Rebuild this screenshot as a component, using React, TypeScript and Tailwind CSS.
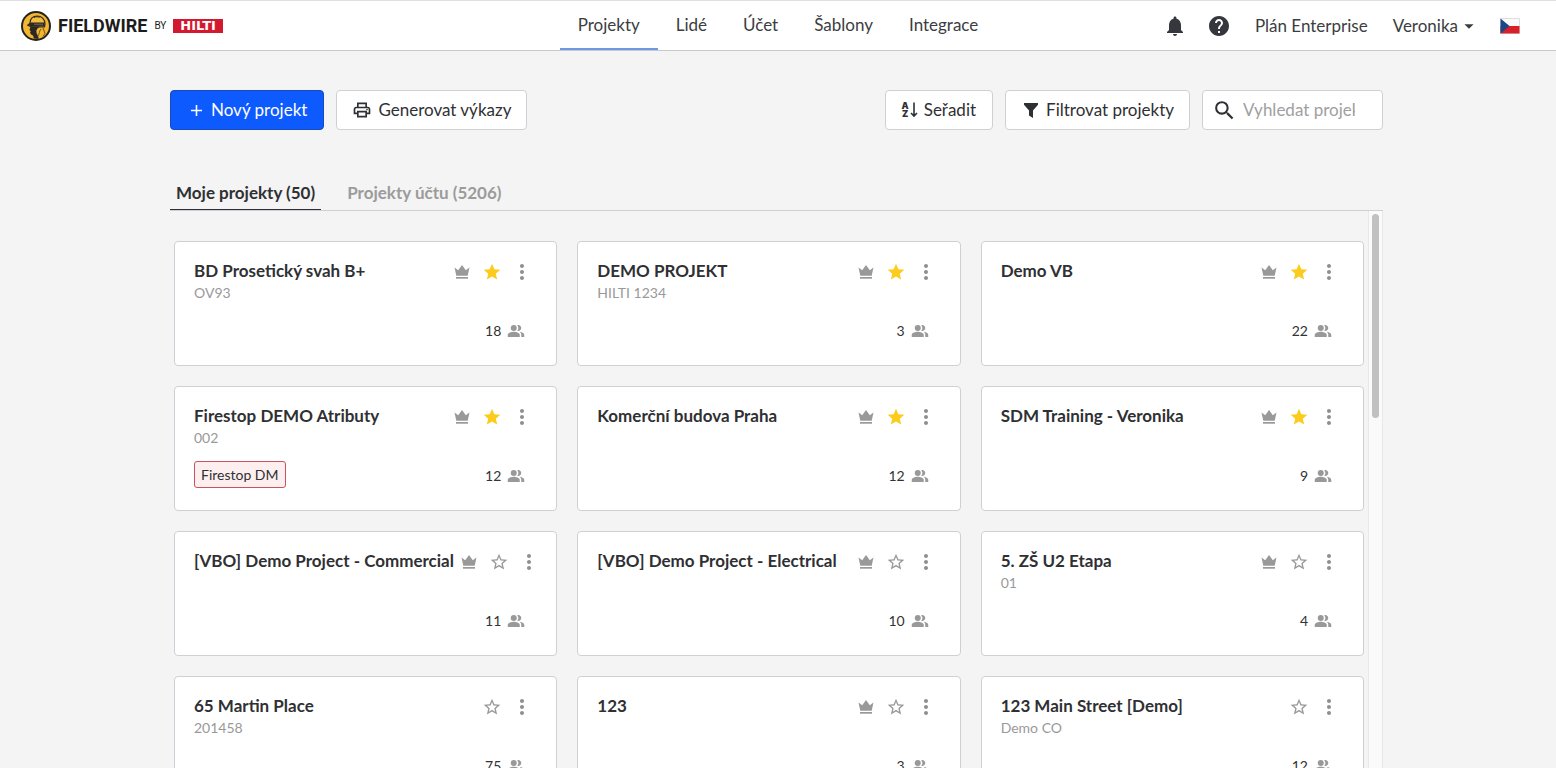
import React, { useState } from 'react';
import {
  MdAdd,
  MdArrowDropDown,
  MdHelp,
  MdMoreVert,
  MdNotifications,
  MdOutlinePrint,
  MdPeopleAlt,
  MdSearch,
  MdStar,
  MdStarBorder,
} from 'react-icons/md';

interface Project {
  name: string;
  code?: string;
  tag?: string;
  members: number;
  crown: boolean;
  starred: boolean;
}

const PROJECTS: Project[] = [
  { name: 'BD Prosetický svah B+', code: 'OV93', members: 18, crown: true, starred: true },
  { name: 'DEMO PROJEKT', code: 'HILTI 1234', members: 3, crown: true, starred: true },
  { name: 'Demo VB', members: 22, crown: true, starred: true },
  { name: 'Firestop DEMO Atributy', code: '002', tag: 'Firestop DM', members: 12, crown: true, starred: true },
  { name: 'Komerční budova Praha', members: 12, crown: true, starred: true },
  { name: 'SDM Training - Veronika', members: 9, crown: true, starred: true },
  { name: '[VBO] Demo Project - Commercial', members: 11, crown: true, starred: false },
  { name: '[VBO] Demo Project - Electrical', members: 10, crown: true, starred: false },
  { name: '5. ZŠ U2 Etapa', code: '01', members: 4, crown: true, starred: false },
  { name: '65 Martin Place', code: '201458', members: 75, crown: false, starred: false },
  { name: '123', members: 3, crown: true, starred: false },
  { name: '123 Main Street [Demo]', code: 'Demo CO', members: 12, crown: false, starred: false },
];

const NAV = ['Projekty', 'Lidé', 'Účet', 'Šablony', 'Integrace'];

const LogoMark = () => (
  <svg className="w-[30px] h-[30px]" viewBox="0 0 30 30" aria-hidden="true">
    <circle cx="15" cy="15" r="14" fill="#f2b632" stroke="#26231f" strokeWidth="2" />
    {/* helmet */}
    <path d="M9 12C9 7.500 12 5 16 5c5 0 8 3.500 8 8l-.5 3H11l-4-1.500Z" fill="#f5bd3d" stroke="#2b2721" strokeWidth="1.200" />
    <path d="M13 6.500c2-1 4-1 5.500 0" stroke="#2b2721" strokeWidth="1" fill="none" />
    <path d="M6 14l4-2.500h13.500v4L11 15.500Z" fill="#2b2721" />
    <path d="M13 12.500h9v2l-9-.5Z" fill="#5d564d" />
    {/* shaded face */}
    <path d="M9.500 15.500h9.500c-3 2-4 3.500-3.500 6 .3 2 2.500 3.500 2 6.500l-5-.5c.5-2-.5-3.500-2.500-4l-1-2 .8-1-1.300-1.500Z" fill="#2b2721" />
    <path d="M20 18c-2.500 3-1 4.500-3 7M22 17l2 5.500-2 3" stroke="#6b5526" strokeWidth="1" fill="none" />
  </svg>
);

const Crown = () => (
  <svg className="w-4 h-4" viewBox="0 0 16 16" fill="#999" role="img" aria-label="Správce">
    <path d="M0.500 3.500l3.700 2.700L8 1l3.800 5.200 3.700-2.700-1.800 8.300H2.300Z" />
    <path d="M2 13h12v1.700H2Z" />
  </svg>
);

const SortIcon = () => (
  <span className="flex items-center gap-px" aria-hidden="true">
    <span className="flex flex-col font-['Inter',sans-serif] text-[9px] leading-[8px] font-black text-center">
      <span>A</span>
      <span>Z</span>
    </span>
    <svg className="w-2 h-4" viewBox="0 0 8 16" fill="none" stroke="#2f3033" strokeWidth="1.600">
      <path d="M4 .5v13M1 11l3 3 3-3" />
    </svg>
  </span>
);

const FilterIcon = () => (
  <svg className="w-[14px] h-[15px]" viewBox="0 0 14 15" fill="#2f3033" aria-hidden="true">
    <path d="M0 0h14v1.800L9 7.500V15L5 12.500v-5L0 1.800Z" />
  </svg>
);

const CzechFlag = () => (
  <svg className="w-5 h-4" viewBox="0 0 20 16" role="img" aria-label="Čeština">
    <path d="M.5 .5h19v15H.5Z" fill="#fafafa" stroke="#dedede" />
    <path d="M.5 8h19v7.500H.5Z" fill="#d7202a" />
    <path d="M.5 .5L9.500 8l-9 7.500Z" fill="#1d4686" />
  </svg>
);

const Header = () => (
  <header className="grid grid-cols-[1fr_auto_1fr] h-[51px] shrink-0 bg-white border-t border-t-[#dfdfdf] border-b border-b-[#c9c9cb] text-[#3c3d41]">
    <a href="#" className="flex items-center pl-[21px] text-[#1c1c1c]">
      <LogoMark />
      <span className="ml-[7px] font-['Roboto',sans-serif] text-lg font-bold">FIELDWIRE</span>
      <span className="ml-[7px] font-['Roboto',sans-serif] text-[10px]">BY</span>
      <span className="ml-[7px] h-[14px] px-[7px] bg-[#d2192f] text-white font-['DejaVu_Sans',sans-serif] text-[13px] leading-[14px] font-bold">
        HILTI
      </span>
    </a>

    <nav className="flex">
      {NAV.map((item, i) => (
        <a
          key={item}
          href="#"
          className={`flex items-center px-[18px] border-b-2 ${i === 0 ? 'border-[#6f98e4]' : 'border-transparent'}`}
        >
          {item}
        </a>
      ))}
    </nav>

    <div className="flex items-center justify-end pr-9">
      <button type="button" aria-label="Oznámení">
        <MdNotifications className="w-6 h-6 text-[#35373d]" />
      </button>
      <button type="button" aria-label="Nápověda" className="ml-5">
        <MdHelp className="w-6 h-6 text-[#35373d]" />
      </button>
      <a href="#" className="ml-6">Plán Enterprise</a>
      <button type="button" className="flex items-center ml-[25px]">
        Veronika
        <MdArrowDropDown className="w-[22px] h-[22px]" />
      </button>
      <button type="button" className="ml-5">
        <CzechFlag />
      </button>
    </div>
  </header>
);

const ProjectCard: React.FC<{ project: Project }> = ({ project }) => {
  const [starred, setStarred] = useState(project.starred);

  return (
    <article className="flex flex-col justify-between h-[125px] pt-[18px] pb-[19px] pl-[19px] bg-white border border-[#cfd0d6] rounded">
      <div className="flex justify-between pr-[19px]">
        <div className="leading-[22px] whitespace-nowrap">
          <h2 className="font-bold">{project.name}</h2>
          <p className="text-sm leading-[22px] text-[#999]">{project.code}</p>
        </div>
        <div className="flex h-6">
          {project.crown && (
            <span className="flex items-center justify-center w-[30px]">
              <Crown />
            </span>
          )}
          <button
            type="button"
            aria-label="Oblíbený"
            onClick={() => setStarred(!starred)}
            className="flex items-center justify-center w-[30px]"
          >
            {starred ? (
              <MdStar className="w-5 h-5 text-[#fccb1b]" />
            ) : (
              <MdStarBorder className="w-5 h-5 text-[#999]" />
            )}
          </button>
          <button type="button" aria-label="Možnosti" className="flex items-center justify-center w-[30px]">
            <MdMoreVert className="w-6 h-6 text-[#8f8f8f]" />
          </button>
        </div>
      </div>

      <div className="flex justify-between h-[30px] pr-[31px] text-sm">
        <div>
          {project.tag && (
            <span className="block px-[6px] py-px leading-[23px] bg-[#fdefef] border border-[#c9525c] rounded-[3px] text-[#2f3033]">
              {project.tag}
            </span>
          )}
        </div>
        <div className="flex items-center gap-[6px] text-[#333]">
          {project.members}
          <MdPeopleAlt className="w-[18px] h-[18px] text-[#999]" />
        </div>
      </div>
    </article>
  );
};

const App: React.FC = () => (
  <div className="flex flex-col h-screen overflow-hidden bg-[#f4f4f4] font-['Lato',sans-serif] text-[17px] text-[#2f3033]">
    <Header />

    <main className="flex flex-col flex-1 min-h-0 pt-[39px] pl-[170px] pr-[173px]">
      <div className="flex gap-3">
        <button
          type="button"
          className="flex items-center gap-[5px] h-10 px-4 bg-[#0d5aff] border border-[#1a49b8] rounded text-white"
        >
          <MdAdd className="w-[19px] h-[19px]" />
          Nový projekt
        </button>
        <button
          type="button"
          className="flex items-center gap-[6px] h-10 px-[15px] mr-auto bg-white border border-[#cfd0d6] rounded"
        >
          <MdOutlinePrint className="w-5 h-5" />
          Generovat výkazy
        </button>
        <button type="button" className="flex items-center gap-[6px] h-10 px-4 bg-white border border-[#cfd0d6] rounded">
          <SortIcon />
          Seřadit
        </button>
        <button type="button" className="flex items-center gap-2 h-10 pl-[18px] pr-[15px] bg-white border border-[#cfd0d6] rounded">
          <FilterIcon />
          Filtrovat projekty
        </button>
        <label className="flex items-center gap-[6px] w-[181px] h-10 pl-[9px] pr-[27px] bg-white border border-[#cfd0d6] rounded">
          <MdSearch className="w-[25px] h-[25px] shrink-0" />
          <input
            type="text"
            aria-label="Vyhledat projekty"
            placeholder="Vyhledat projekty"
            className="w-full min-w-0 outline-none placeholder:text-[#a0a0a0]"
          />
        </label>
      </div>

      <div className="flex gap-5 h-[41px] mt-10 border-b border-[#cfd0d6] font-bold">
        <button type="button" className="px-[6px] pt-[6px] border-b border-[#2f3033]">Moje projekty (50)</button>
        <button type="button" className="px-[6px] pt-[6px] border-b border-transparent text-[#9b9b9b]">
          Projekty účtu (5206)
        </button>
      </div>

      <div className="flex flex-1 min-h-0">
        <div className="flex-1 pt-[30px] pl-1 pr-1 overflow-hidden">
          <div className="grid grid-cols-3 gap-5">
            {PROJECTS.map((project) => (
              <ProjectCard key={project.name} project={project} />
            ))}
          </div>
        </div>
        {/* Scroll track */}
        <div className="w-[15px] pt-[3px] px-[3px] bg-[#fafafa] border-x border-[#e8e8e8]">
          <div className="h-[204px] rounded-full bg-[#c1c1c1]" />
        </div>
      </div>
    </main>
  </div>
);

export default App;
